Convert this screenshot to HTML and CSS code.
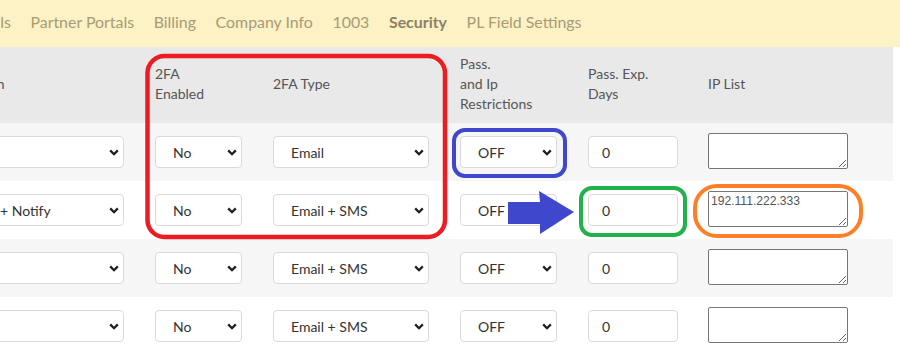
FILE: index.html
```html
<!DOCTYPE html>
<html>
<head>
<meta charset="utf-8">
<link rel="stylesheet" href="styles.css">
</head>
<body>
<div class="page">
  <nav class="tabs">
    <span class="tab">Details</span>
    <span class="tab">Partner Portals</span>
    <span class="tab">Billing</span>
    <span class="tab">Company Info</span>
    <span class="tab">1003</span>
    <span class="tab active">Security</span>
    <span class="tab">PL Field Settings</span>
  </nav>
  <div class="table-wrap">
    <table class="grid">
      <colgroup>
        <col class="c1"><col class="c2"><col class="c3"><col class="c4"><col class="c5"><col class="c6">
      </colgroup>
      <thead>
        <tr>
          <th>Duration</th>
          <th>2FA<br>Enabled</th>
          <th>2FA Type</th>
          <th>Pass.<br>and Ip<br>Restrictions</th>
          <th>Pass. Exp.<br>Days</th>
          <th>IP List</th>
        </tr>
      </thead>
      <tbody>
        <tr>
          <td><span class="sel w1"><select><option></option></select><svg class="chev" viewBox="0 0 10 7"><path d="M1.2 1.4 L5 5.2 L8.8 1.4"/></svg></span></td>
          <td><span class="sel w2"><select><option>No</option></select><svg class="chev" viewBox="0 0 10 7"><path d="M1.2 1.4 L5 5.2 L8.8 1.4"/></svg></span></td>
          <td><span class="sel w3"><select><option>Email</option></select><svg class="chev" viewBox="0 0 10 7"><path d="M1.2 1.4 L5 5.2 L8.8 1.4"/></svg></span></td>
          <td><span class="sel w4"><select><option>OFF</option></select><svg class="chev" viewBox="0 0 10 7"><path d="M1.2 1.4 L5 5.2 L8.8 1.4"/></svg></span></td>
          <td><input class="num" type="text" value="0"></td>
          <td><textarea class="ips"></textarea></td>
        </tr>
        <tr>
          <td><span class="sel w1"><select><option>Lock + Notify</option></select><svg class="chev" viewBox="0 0 10 7"><path d="M1.2 1.4 L5 5.2 L8.8 1.4"/></svg></span></td>
          <td><span class="sel w2"><select><option>No</option></select><svg class="chev" viewBox="0 0 10 7"><path d="M1.2 1.4 L5 5.2 L8.8 1.4"/></svg></span></td>
          <td><span class="sel w3"><select><option>Email + SMS</option></select><svg class="chev" viewBox="0 0 10 7"><path d="M1.2 1.4 L5 5.2 L8.8 1.4"/></svg></span></td>
          <td><span class="sel w4"><select><option>OFF</option></select><svg class="chev" viewBox="0 0 10 7"><path d="M1.2 1.4 L5 5.2 L8.8 1.4"/></svg></span></td>
          <td><input class="num" type="text" value="0"></td>
          <td><textarea class="ips">192.111.222.333</textarea></td>
        </tr>
        <tr>
          <td><span class="sel w1"><select><option></option></select><svg class="chev" viewBox="0 0 10 7"><path d="M1.2 1.4 L5 5.2 L8.8 1.4"/></svg></span></td>
          <td><span class="sel w2"><select><option>No</option></select><svg class="chev" viewBox="0 0 10 7"><path d="M1.2 1.4 L5 5.2 L8.8 1.4"/></svg></span></td>
          <td><span class="sel w3"><select><option>Email + SMS</option></select><svg class="chev" viewBox="0 0 10 7"><path d="M1.2 1.4 L5 5.2 L8.8 1.4"/></svg></span></td>
          <td><span class="sel w4"><select><option>OFF</option></select><svg class="chev" viewBox="0 0 10 7"><path d="M1.2 1.4 L5 5.2 L8.8 1.4"/></svg></span></td>
          <td><input class="num" type="text" value="0"></td>
          <td><textarea class="ips"></textarea></td>
        </tr>
        <tr>
          <td><span class="sel w1"><select><option></option></select><svg class="chev" viewBox="0 0 10 7"><path d="M1.2 1.4 L5 5.2 L8.8 1.4"/></svg></span></td>
          <td><span class="sel w2"><select><option>No</option></select><svg class="chev" viewBox="0 0 10 7"><path d="M1.2 1.4 L5 5.2 L8.8 1.4"/></svg></span></td>
          <td><span class="sel w3"><select><option>Email + SMS</option></select><svg class="chev" viewBox="0 0 10 7"><path d="M1.2 1.4 L5 5.2 L8.8 1.4"/></svg></span></td>
          <td><span class="sel w4"><select><option>OFF</option></select><svg class="chev" viewBox="0 0 10 7"><path d="M1.2 1.4 L5 5.2 L8.8 1.4"/></svg></span></td>
          <td><input class="num" type="text" value="0"></td>
          <td><textarea class="ips"></textarea></td>
        </tr>
      </tbody>
    </table>
  </div>
  <svg class="marks" viewBox="0 0 900 350" width="900" height="350">
    <rect class="m-red" x="147.5" y="56" width="297.5" height="181" rx="17"/>
    <rect class="m-blue" x="454" y="130" width="111" height="46" rx="11"/>
    <rect class="m-green" x="581" y="188" width="104" height="47" rx="11"/>
    <rect class="m-orange" x="695" y="186" width="166" height="50" rx="22"/>
    <polygon class="m-arrow" points="508,202 540,202 539,191 574,212 540,234 540,224 508,224"/>
  </svg>
</div>
</body>
</html>
```

FILE: styles.css
```css
html, body {
  margin: 0;
  padding: 0;
  background: #ffffff;
}

.page {
  position: relative;
  width: 900px;
  height: 350px;
  overflow: hidden;
  font-family: Lato, "Open Sans", Arial, sans-serif;
}

.tabs {
  display: flex;
  align-items: center;
  gap: 19.6px;
  height: 47px;
  padding-bottom: 5px;
  box-sizing: border-box;
  background: #fdf1c6;
  margin-left: -37.5px;
  white-space: nowrap;
}

.tab {
  font-size: 15.9px;
  color: #a89c74;
}

.tab.active {
  font-weight: 700;
  color: #8d8262;
}

.table-wrap {
  width: 900px;
  overflow: hidden;
}

.grid {
  border-collapse: collapse;
  table-layout: fixed;
  width: 959px;
  margin-left: -66px;
}

.c1 { width: 205px; }
.c2 { width: 118px; }
.c3 { width: 187px; }
.c4 { width: 128px; }
.c5 { width: 120px; }
.c6 { width: 201px; }

.grid th,
.grid td {
  padding: 0 15px 0 16px;
  vertical-align: middle;
  text-align: left;
}

.grid thead tr {
  height: 76px;
  background: #e9e9e9;
}

.grid th {
  font-weight: 400;
  font-size: 14px;
  line-height: 20px;
  color: #555555;
  padding-bottom: 2px;
}

.grid tbody tr {
  height: 58px;
}

.grid tbody tr:nth-child(odd) {
  background: #f6f6f6;
}

.grid tbody tr:nth-child(even) {
  background: #ffffff;
}

.sel {
  position: relative;
  display: block;
  height: 32px;
}

.sel select {
  appearance: none;
  -webkit-appearance: none;
  width: 100%;
  height: 32px;
  box-sizing: border-box;
  border: 1px solid #dadada;
  border-radius: 4px;
  background: #ffffff;
  padding: 0 0 0 17px;
  font-family: Lato, "Open Sans", Arial, sans-serif;
  font-size: 14px;
  color: #333333;
  margin: 0;
}

.w1 { width: 174px; }
.w2 { width: 87px; }
.w3 { width: 156px; }
.w4 { width: 97px; }

.chev {
  position: absolute;
  right: 5px;
  top: 13px;
  width: 10px;
  height: 7px;
  pointer-events: none;
}

.chev path {
  fill: none;
  stroke: #1e1e1e;
  stroke-width: 2.3;
}

.num {
  display: block;
  width: 90px;
  height: 32px;
  box-sizing: border-box;
  border: 1px solid #dadada;
  border-radius: 4px;
  padding: 0 0 0 13px;
  font-family: Lato, "Open Sans", Arial, sans-serif;
  font-size: 14px;
  color: #333333;
  background: #ffffff;
  margin: 0;
}

.ips {
  display: block;
  width: 140px;
  height: 36px;
  box-sizing: border-box;
  border: 1px solid #767676;
  border-radius: 2px;
  padding: 2px 2px;
  font-family: "Liberation Sans", Arial, sans-serif;
  font-size: 12.1px;
  color: #555555;
  background: #ffffff;
  margin: -2px 0 0 0;
  resize: both;
}

.marks {
  position: absolute;
  top: 0;
  left: 0;
  pointer-events: none;
}

.marks rect {
  fill: none;
}

.m-red { stroke: #ed1c24; stroke-width: 4.5; }
.m-blue { stroke: #3f48cc; stroke-width: 4; }
.m-green { stroke: #22b14c; stroke-width: 4; }
.m-orange { stroke: #ff7f27; stroke-width: 4; }
.m-arrow { fill: #3f48cc; }
```
